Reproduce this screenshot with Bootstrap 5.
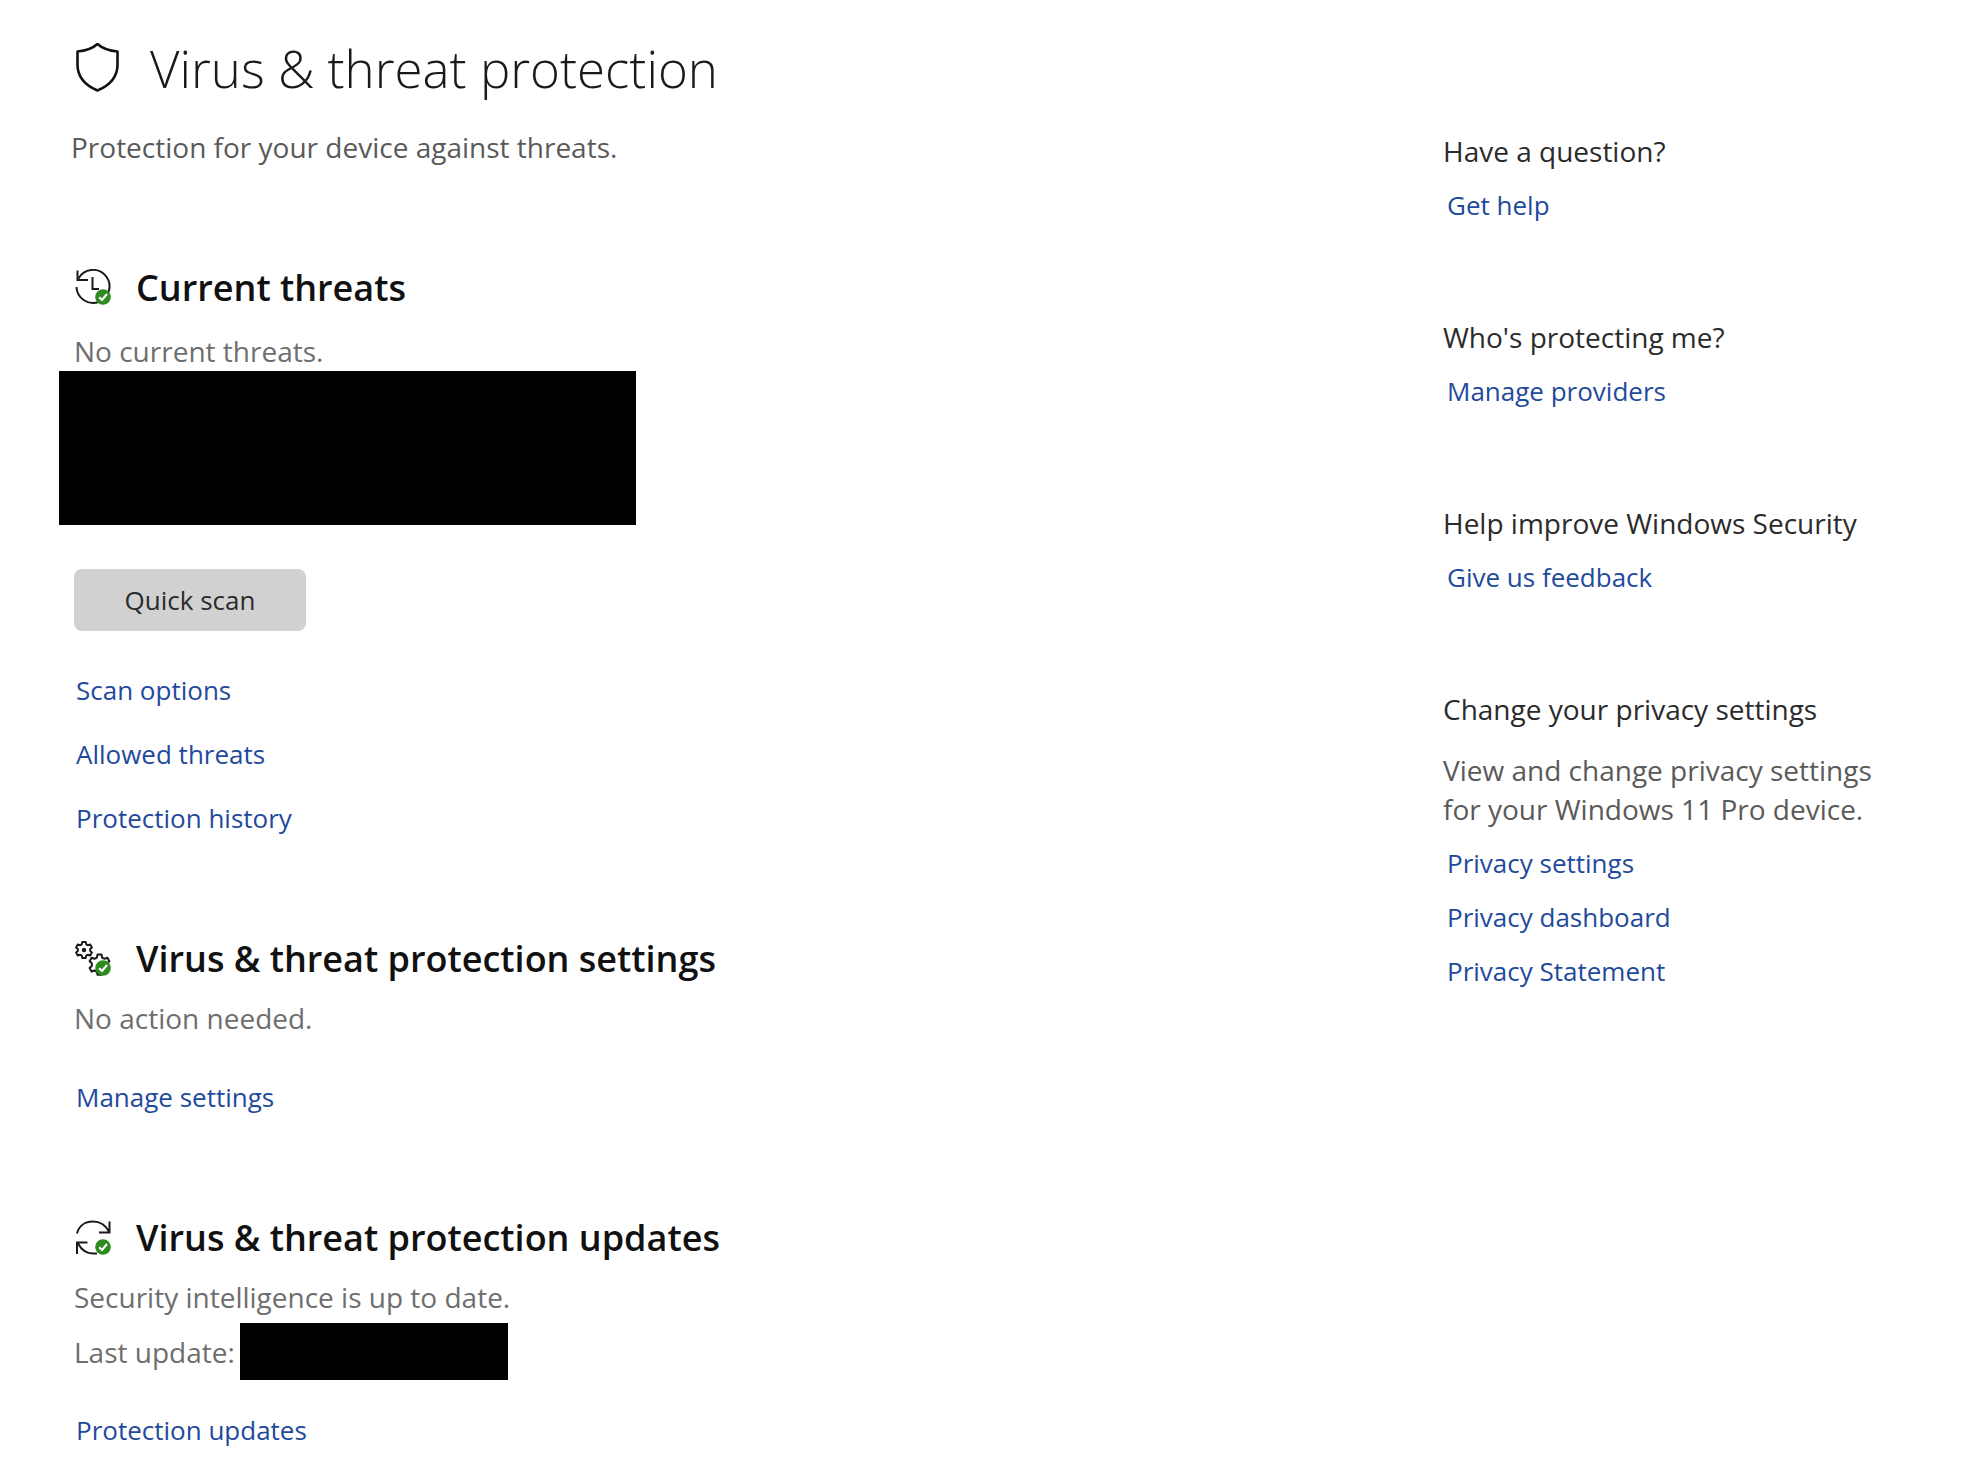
<!DOCTYPE html>
<html lang="en">
<head>
<meta charset="utf-8">
<meta name="viewport" content="width=device-width, initial-scale=1">
<title>Virus &amp; threat protection</title>
<link href="https://cdn.jsdelivr.net/npm/bootstrap@5.3.0/dist/css/bootstrap.min.css" rel="stylesheet">
<style>
  body { font-family: "Open Sans", "Noto Sans", sans-serif; font-size: 28px; line-height: 40px; color: #2b2b2b; background: #fff; }
  .page-body { padding: 32px 0 12px 59px; }
  .inset { padding-left: 15px; }
  .page-title { font-size: 51px; line-height: 72px; font-weight: 300; color: #1a1a1a; gap: 30px; }
  .page-intro { margin-top: 23px; padding-left: 12px; color: #5a5a5a; }
  .panel { margin-top: 97px; }
  .panel-title { font-size: 36px; line-height: 48px; font-weight: 600; color: #111; gap: 24px; }
  .status-text { margin-top: 15px; color: #6e6e6e; }
  .first-status { margin-top: 19px; }
  .action-link { font-size: 26px; color: #1f4a9c; text-decoration: none; }
  .action-link:hover { text-decoration: underline; }
  .panel-links { margin-top: 39px; padding-left: 2px; gap: 24px; }
  .redacted-block { width: 577px; height: 154px; background: #000; }
  .redacted-inline { width: 268px; height: 57px; background: #000; }
  .update-row { margin-top: 6px; gap: 5px; color: #6e6e6e; }
  .update-links { margin-top: 30px; }
  .scan-btn { margin-top: 44px; width: 232px; height: 62px; padding: 0; font-size: 26px; color: #2b2b2b; background: #d1d1d1; border: 0; border-radius: 8px; }
  .scan-btn:hover { background: #c4c4c4; }
  .help-side { width: 529px; padding: 99px 70px 0 0; gap: 92px; }
  .help-title { font-size: 28px; line-height: 40px; font-weight: 400; }
  .help-links { margin-top: 14px; padding-left: 4px; gap: 14px; }
  .help-note { margin-top: 22px; line-height: 39px; color: #5a5a5a; }
</style>
<script src="https://cdn.jsdelivr.net/npm/bootstrap@5.3.0/dist/js/bootstrap.bundle.min.js" defer></script>
</head>
<body>
<svg class="d-none" aria-hidden="true">
  <symbol id="ok-badge" viewBox="0 0 16 16">
    <circle cx="8" cy="8" r="7.8" fill="#2f8a1f" stroke="none"/>
    <path d="M4.2 8.2 7 11l5-6" fill="none" stroke="#fff" stroke-width="2.1"/>
  </symbol>
</svg>
<div class="page-body d-flex align-items-start">
  <main class="flex-grow-1">
    <header>
      <h1 class="page-title inset d-flex align-items-center mb-0">
        <svg class="flex-shrink-0" width="46" height="50" viewBox="0 0 46 50" fill="none" stroke="#111" stroke-width="2.6" stroke-linejoin="round" aria-hidden="true"><path d="M23.500 1c5 4.500 12 6.800 20 7.500V21.500c0 12-8 21-20 26C11.500 42.500 3.500 33.500 3.500 21.500V8.500C11.500 7.800 18.500 5.500 23.500 1Z"/></svg>
        <span>Virus &amp; threat protection</span>
      </h1>
      <p class="page-intro mb-0">Protection for your device against threats.</p>
    </header>

    <section class="panel">
      <h2 class="panel-title inset d-flex align-items-center mb-0">
        <svg class="flex-shrink-0" width="38" height="38" viewBox="0 0 38 38" fill="none" stroke="#1a1a1a" stroke-width="2" aria-hidden="true"><path d="M4.500 9.500A16.500 16.500 0 1 1 2.500 18M3.500 1.500v9.500H14M18.500 8v12H25"/><use href="#ok-badge" x="21" y="20" width="16" height="16"/></svg>
        <span>Current threats</span>
      </h2>
      <p class="status-text first-status inset mb-0">No current threats.</p>
      <div class="redacted-block"></div>
      <div class="inset">
        <button type="button" class="btn scan-btn d-block">Quick scan</button>
        <div class="panel-links d-flex flex-column align-items-start">
          <a class="action-link" href="#scan-options">Scan options</a>
          <a class="action-link" href="#allowed">Allowed threats</a>
          <a class="action-link" href="#history">Protection history</a>
        </div>
      </div>
    </section>

    <section class="panel">
      <h2 class="panel-title inset d-flex align-items-center mb-0">
        <svg class="flex-shrink-0" width="38" height="38" viewBox="0 0 38 38" fill="none" stroke="#1a1a1a" stroke-width="2" stroke-linejoin="round" aria-hidden="true">
          <path d="M8.300 2h3.400l.5 2.300 1.800 1 2.200-.8 1.700 2.900-1.700 1.600v2l1.700 1.600-1.700 2.900-2.200-.8-1.800 1-.5 2.300H8.300l-.5-2.300-1.800-1-2.200.8-1.700-2.900L3.800 11V9L2.100 7.400l1.700-2.900 2.200.8 1.800-1Z"/><circle cx="10" cy="10" r="1.200"/>
          <path d="M23.500 14.500h4l.6 3 2.400 1.300 2.900-1 2 3.500-2.200 2v2.700l2.200 2-2 3.500-2.900-1-2.400 1.300-.6 3h-4l-.6-3-2.400-1.300-2.900 1-2-3.500 2.200-2v-2.700l-2.200-2 2-3.500 2.900 1 2.400-1.300Z"/>
          <use href="#ok-badge" x="21" y="20" width="16" height="16"/></svg>
        <span>Virus &amp; threat protection settings</span>
      </h2>
      <p class="status-text inset mb-0">No action needed.</p>
      <div class="inset">
        <div class="panel-links d-flex flex-column align-items-start">
          <a class="action-link" href="#settings">Manage settings</a>
        </div>
      </div>
    </section>

    <section class="panel">
      <h2 class="panel-title inset d-flex align-items-center mb-0">
        <svg class="flex-shrink-0" width="38" height="38" viewBox="0 0 38 38" fill="none" stroke="#1a1a1a" stroke-width="2" aria-hidden="true"><path d="M3 14.500C5 6.500 11.500 2.500 19 2.500c7 0 12.500 3.500 16 10M35.500 2.500v11H25M3 35V23.500h10.500M4 24.500C7.500 31 13 34.500 19 34.500h4"/><use href="#ok-badge" x="21" y="20" width="16" height="16"/></svg>
        <span>Virus &amp; threat protection updates</span>
      </h2>
      <p class="status-text inset mb-0">Security intelligence is up to date.</p>
      <div class="update-row inset d-flex align-items-center"><span>Last update:</span><div class="redacted-inline"></div></div>
      <div class="inset">
        <div class="panel-links update-links d-flex flex-column align-items-start">
          <a class="action-link" href="#updates">Protection updates</a>
        </div>
      </div>
    </section>
  </main>

  <aside class="help-side flex-shrink-0 d-flex flex-column">
    <section>
      <h2 class="help-title mb-0">Have a question?</h2>
      <div class="help-links d-flex flex-column align-items-start"><a class="action-link" href="#help">Get help</a></div>
    </section>
    <section>
      <h2 class="help-title mb-0">Who's protecting me?</h2>
      <div class="help-links d-flex flex-column align-items-start"><a class="action-link" href="#providers">Manage providers</a></div>
    </section>
    <section>
      <h2 class="help-title mb-0">Help improve Windows Security</h2>
      <div class="help-links d-flex flex-column align-items-start"><a class="action-link" href="#feedback">Give us feedback</a></div>
    </section>
    <section>
      <h2 class="help-title mb-0">Change your privacy settings</h2>
      <p class="help-note mb-0">View and change privacy settings for your Windows 11 Pro device.</p>
      <div class="help-links d-flex flex-column align-items-start">
        <a class="action-link" href="#privacy-settings">Privacy settings</a>
        <a class="action-link" href="#privacy-dashboard">Privacy dashboard</a>
        <a class="action-link" href="#privacy-statement">Privacy Statement</a>
      </div>
    </section>
  </aside>
</div>
</body>
</html>
